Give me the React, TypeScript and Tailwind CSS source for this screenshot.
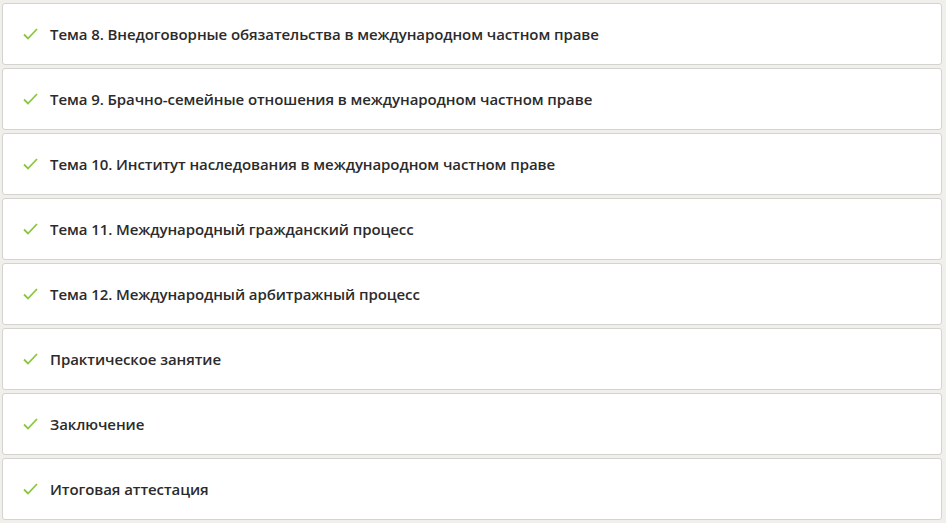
import React from "react";

const items = [
  "Тема 8. Внедоговорные обязательства в международном частном праве",
  "Тема 9. Брачно-семейные отношения в международном частном праве",
  "Тема 10. Институт наследования в международном частном праве",
  "Тема 11. Международный гражданский процесс",
  "Тема 12. Международный арбитражный процесс",
  "Практическое занятие",
  "Заключение",
  "Итоговая аттестация",
];

function Check() {
  return (
    <svg width="15" height="12" viewBox="0 0 15 12" fill="none">
      <path d="M1 6.5 L5 10.5 L14 1" stroke="#8cc63f" strokeWidth="1.8" />
    </svg>
  );
}

export default function App() {
  return (
    <div
      className="w-[946px] h-[523px] bg-[#f0efeb] pt-[3px] pl-[2px] flex flex-col gap-[3px] overflow-hidden"
      style={{ fontFamily: '"Open Sans", "Noto Sans", sans-serif' }}
    >
      {items.map((t) => (
        <div
          key={t}
          className="w-[940px] h-[62px] shrink-0 bg-white border border-[#d3d3d0] rounded-[3px] flex items-center pl-[20px] gap-[12px]"
        >
          <Check />
          <span className="text-[15px] font-semibold tracking-[-0.08px] text-[#2b2b2b]">{t}</span>
        </div>
      ))}
    </div>
  );
}
